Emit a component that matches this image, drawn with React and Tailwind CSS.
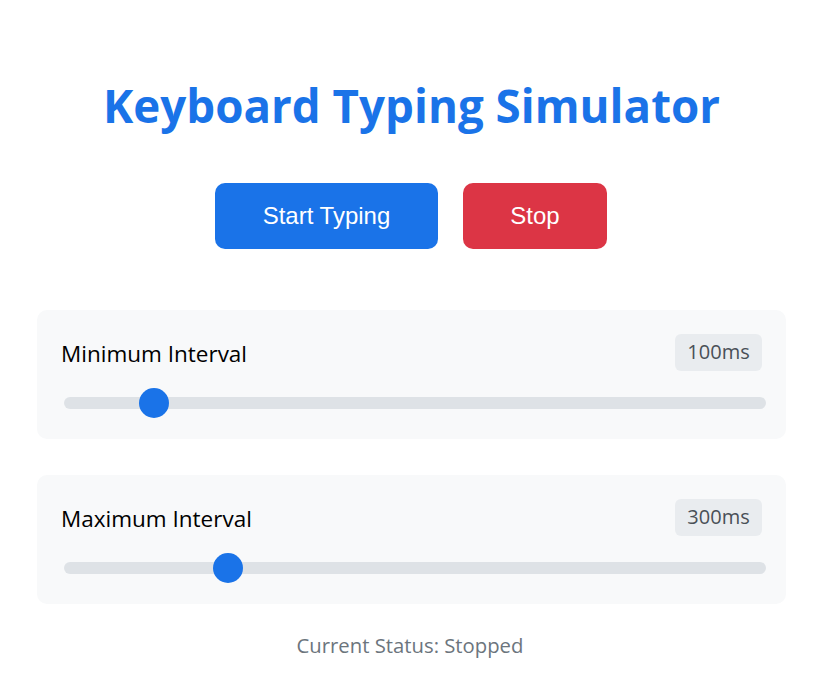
import React from 'react';

const sans = { fontFamily: '"Open Sans", "Noto Sans", sans-serif' };

function IntervalCard({ label, value, pct }) {
  return (
    <div className="rounded-[10px] bg-[#f8f9fa] px-[24px] pt-[24px] pb-[21px]">
      <div className="flex h-[37px] items-center justify-between">
        <span className="pt-[3px] text-[22.5px] text-black">{label}</span>
        <span className="flex h-[37px] w-[87px] items-center justify-center rounded-[6px] bg-[#e9ecef] text-[20px] text-[#495057]">
          {value}ms
        </span>
      </div>
      <div className="relative mt-[17px] ml-[3px] -mr-[4px] flex h-[30px] items-center">
        <div className="h-[12px] w-full rounded-full bg-[#dee2e6]" />
        <div
          className="absolute top-0 h-[30px] w-[30px] -translate-x-1/2 rounded-full bg-[#1a73e8]"
          style={{ left: `calc(15px + (100% - 30px) * ${pct})` }}
        />
      </div>
    </div>
  );
}

export default function App() {
  return (
    <div className="min-h-screen bg-white pt-[78px]" style={sans}>
      <h1 className="pl-[3px] text-center text-[45.7px] font-bold leading-[1.2] text-[#1a73e8]">
        Keyboard Typing Simulator
      </h1>

      <div className="mt-[50px] flex justify-center gap-[25px] pl-[2px]" style={{ fontFamily: '"Liberation Sans", Arial, sans-serif' }}>
        <button className="h-[66px] w-[223px] rounded-[10px] bg-[#1a73e8] text-[24px] text-white">
          Start Typing
        </button>
        <button className="h-[66px] w-[144px] rounded-[10px] bg-[#dc3545] text-[24px] text-white">
          Stop
        </button>
      </div>

      <div className="mt-[61px] flex flex-col gap-[36px] pl-[37px] pr-[34px]">
        <IntervalCard label="Minimum Interval" value={100} pct={0.111} />
        <IntervalCard label="Maximum Interval" value={300} pct={0.222} />
      </div>

      <p className="mt-[26px] text-center text-[20.3px] leading-[30px] text-[#6c757d]">
        Current Status: Stopped
      </p>
    </div>
  );
}
